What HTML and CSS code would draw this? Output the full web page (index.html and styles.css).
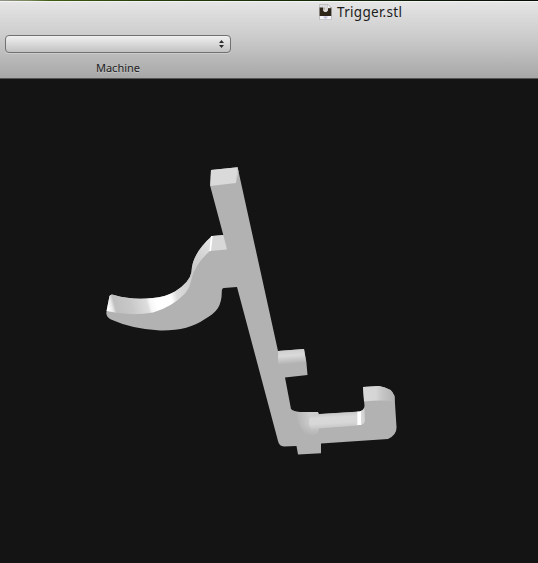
FILE: index.html
```
<!DOCTYPE html>
<html lang="en">
<head>
<meta charset="utf-8">
<title>Trigger.stl</title>
<link rel="stylesheet" href="styles.css">
</head>
<body>
<div class="window">
  <div class="desktop-edge"></div>
  <header class="toolbar">
    <div class="titlebar">
      <svg class="doc-icon" width="13" height="16" viewBox="0 0 13 16" aria-hidden="true">
        <path d="M.5.5H9L12.5 4v11.500H.5z" fill="#dcdcdc" stroke="#b5b5b5" stroke-width=".7"/>
        <path d="M.6 3.500H4v3L5.500 8h2L9 6.500v-3h3.300V12H.6z" fill="#30271c"/>
        <path d="M4.500 3.500h1v2.300h-1z" fill="#958a7c"/>
        <path d="M8.500.7V4H12z" fill="#fff" stroke="#b7b7b7" stroke-width=".5"/>
        <path d="M1 12h11v3.200H1z" fill="#f5f5fa"/>
        <path d="M4.500 13h4M5.500 14h2" stroke="#8c8cc0" stroke-width=".7"/>
      </svg>
      <h1 class="title">Trigger.stl</h1>
    </div>
    <div class="machine">
      <button class="popup" aria-label="Machine">
        <svg width="5" height="8" viewBox="0 0 5 8" aria-hidden="true">
          <path d="M0 3 2.5 0 5 3zM0 5h5L2.5 8z" fill="#2d2d2d"/>
        </svg>
      </button>
      <span class="label">Machine</span>
    </div>
  </header>
  <main class="viewport">
    <svg class="model" width="538" height="484" viewBox="0 79 538 484" role="img" aria-label="Trigger model">
      <defs>
        <linearGradient id="curve" gradientUnits="userSpaceOnUse" x1="107" y1="304" x2="194" y2="280">
          <stop offset="0" stop-color="#fff"/>
          <stop offset=".045" stop-color="#e8e8e8"/>
          <stop offset=".08" stop-color="#bfbfbf"/>
          <stop offset=".25" stop-color="#c8c8c8"/>
          <stop offset=".43" stop-color="#dedede"/>
          <stop offset=".46" stop-color="#f6f6f6"/>
          <stop offset=".53" stop-color="#fff"/>
          <stop offset=".7" stop-color="#fff"/>
          <stop offset=".77" stop-color="#dcdcdc"/>
          <stop offset="1" stop-color="#cacaca"/>
        </linearGradient>
        <linearGradient id="neck" gradientUnits="userSpaceOnUse" x1="190" y1="276" x2="211" y2="240">
          <stop offset="0" stop-color="#c8c8c8"/>
          <stop offset=".5" stop-color="#d2d2d2"/>
          <stop offset="1" stop-color="#e4e4e4"/>
        </linearGradient>
        <linearGradient id="peg" gradientUnits="userSpaceOnUse" x1="290" y1="350" x2="291" y2="364">
          <stop offset="0" stop-color="#cfcfcf"/>
          <stop offset=".4" stop-color="#dadada"/>
          <stop offset="1" stop-color="#b2b2b2"/>
        </linearGradient>
        <linearGradient id="rod" gradientUnits="userSpaceOnUse" x1="335" y1="412" x2="336" y2="429">
          <stop offset="0" stop-color="#c2c2c2"/>
          <stop offset=".3" stop-color="#d8d8d8"/>
          <stop offset=".65" stop-color="#d7d7d7"/>
          <stop offset="1" stop-color="#c2c2c2"/>
        </linearGradient>
        <linearGradient id="fillet" gradientUnits="userSpaceOnUse" x1="356" y1="0" x2="365" y2="0">
          <stop offset="0" stop-color="#d2d2d2"/>
          <stop offset=".25" stop-color="#fff"/>
          <stop offset=".5" stop-color="#fff"/>
          <stop offset=".58" stop-color="#dadada"/>
          <stop offset="1" stop-color="#cecece"/>
        </linearGradient>
        <linearGradient id="hook" gradientUnits="userSpaceOnUse" x1="363" y1="0" x2="395" y2="0">
          <stop offset="0" stop-color="#d8d8d8"/>
          <stop offset=".4" stop-color="#d6d6d6"/>
          <stop offset=".6" stop-color="#c6c6c6"/>
          <stop offset="1" stop-color="#b2b2b2"/>
        </linearGradient>
        <linearGradient id="joint" gradientUnits="userSpaceOnUse" x1="296" y1="422" x2="311" y2="420">
          <stop offset="0" stop-color="#b2b2b2"/>
          <stop offset="1" stop-color="#cecece"/>
        </linearGradient>
        <linearGradient id="joint-fade" gradientUnits="userSpaceOnUse" x1="0" y1="424" x2="0" y2="436">
          <stop offset="0" stop-color="#b2b2b2" stop-opacity="0"/>
          <stop offset="1" stop-color="#b2b2b2"/>
        </linearGradient>
      </defs>

      <!-- lever body -->
      <path fill="#b2b2b2" d="M211 170 237.6 167.2 278 351 304 349Q307 362 307.5 375L285 377.5 291 409Q294 412 300 412L318 412 319 414 360 411.5Q364 410 364.5 406L363 387 379 386Q392 388 394.5 396L396.5 427Q397 435 388 439L321 443.5V453.3L298 454.5 296.5 446 284 446.5Q279 446 278 441L237 287 224 288Q222 288 221.8 291Q222 301 218 308Q214 314 205 319Q188 331 160 330.5Q132 329 111 319.5Q106.5 317 106.3 313L109.5 296Q111 293.5 114 295Q133 300.500 153 298Q165 297 175 291.500Q190 282 191.500 272C192 258 200 247 212 236L223.3 235 210.2 186Z"/>

      <!-- upper faces -->
      <path fill="#dadada" d="M211 170 237.6 167.2 236 183 210.2 186Z"/>
      <path fill="#d2d2d2" d="m237.6 167.2 .8 4-2.1 12Z"/>
      <path fill="url(#curve)" d="M106.5 311 109.5 296Q111 293.5 114 295Q133 300.500 153 298Q165 297 175 291.500Q190 282 191.500 272L192 277Q190 288 185 293.500Q172 307 153 312.500Q130 316.500 106.500 311Z"/>
      <path fill="url(#neck)" d="M191.500 272C192 258 200 247 212 236L210 251Q196 263 191.700 278Z"/>
      <path fill="#d8d8d8" d="M212 236 223.3 235 227 249.5 210 251Z"/>
      <path fill="#fff" d="M211 236h1.700L211 251h-1.700Z"/>

      <!-- side peg -->
      <path fill="url(#peg)" d="M278 351 304 349 306 362 278 365Z"/>

      <!-- lower arm -->
      <path fill="url(#joint)" d="M293 410.5Q296 412 300 412L318 412 319 430Q317 437 308 435Q299 430 296 413Z"/>
      <path fill="url(#joint-fade)" d="M295 423H319V438H295Z"/>
      <path fill="url(#rod)" d="M318 414.3 361 411.5 358 425.5 311 429Q307 421 311 416Z"/>
      <path fill="url(#fillet)" d="M357 411.8 360 411.5Q363 410.5 364.5 408L365 421Q364 424.5 361 425L356.5 425Z"/>
      <path fill="url(#hook)" d="M363 387 379 386Q392 388 394.5 396V402Q385 399.5 364 401.5Z"/>
    </svg>
  </main>
</div>
</body>
</html>
```
FILE: styles.css
```
body {
  margin: 0;
  background: #141414;
  font-family: "Noto Sans", "Open Sans", sans-serif;
}

.window {
  display: flex;
  flex-direction: column;
  width: 538px;
  height: 563px;
  overflow: hidden;
}

.desktop-edge {
  flex: none;
  height: 1px;
  background: linear-gradient(90deg, #92958a 0, #77865a 30px, #3d5d10 50px, #27400b 140px, #142b08 300px, #080c07 538px);
}

.toolbar {
  display: flex;
  flex: none;
  flex-direction: column;
  box-sizing: border-box;
  height: 78px;
  border-top: 1px solid #f4f4f4;
  border-bottom: 1px solid #555;
  background: linear-gradient(#e5e5e5, #c9c9c9 50%, #a7a7a7);
}

.titlebar {
  display: flex;
  flex: none;
  gap: 5px;
  height: 33px;
  padding: 2px 0 0 319px;
}

.doc-icon {
  flex: none;
}

.title {
  margin: 0;
  color: #1c1c1c;
  font-size: 13.5px;
  font-weight: 400;
  line-height: 17px;
  letter-spacing: 0.3px;
}

.machine {
  display: flex;
  flex-direction: column;
  align-items: center;
  width: 226px;
  margin: -2px 0 0 5px;
}

.popup {
  display: flex;
  align-items: center;
  justify-content: flex-end;
  box-sizing: border-box;
  width: 226px;
  height: 18px;
  padding: 0 6px 0 0;
  border: 1px solid #717171;
  border-radius: 4px;
  background: linear-gradient(#f0f0f0, #d9d9d9 50%, #c2c2c2);
  box-shadow: 0 1px 0 #ffffff40;
}

.label {
  margin-top: 7px;
  color: #1c1c1c;
  font-size: 11px;
  line-height: 15px;
  text-shadow: 0 1px 0 #ffffff50;
}

.viewport {
  flex: 1;
  background: #141414;
}

.model {
  display: block;
}
```
